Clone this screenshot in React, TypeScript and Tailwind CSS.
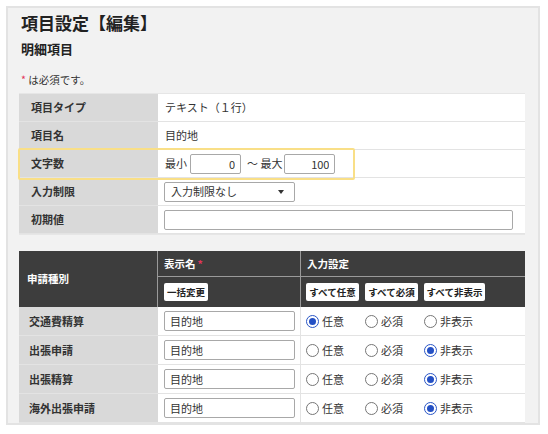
import { useState } from 'react';

type Choice = 'optional' | 'required' | 'hidden';

interface RequestRow {
  id: string;
  label: string;
  displayName: string;
  setting: Choice;
}

const initialRows: RequestRow[] = [
  { id: 'transport', label: '交通費精算', displayName: '目的地', setting: 'optional' },
  { id: 'trip-request', label: '出張申請', displayName: '目的地', setting: 'hidden' },
  { id: 'trip-settle', label: '出張精算', displayName: '目的地', setting: 'hidden' },
  { id: 'overseas', label: '海外出張申請', displayName: '目的地', setting: 'hidden' },
];

const choices: { value: Choice; label: string }[] = [
  { value: 'optional', label: '任意' },
  { value: 'required', label: '必須' },
  { value: 'hidden', label: '非表示' },
];

function Radio({ checked, label, onClick }: { checked: boolean; label: string; onClick: () => void }) {
  return (
    <button type="button" onClick={onClick} className="flex w-[59px] items-center gap-[3px] text-left">
      <span
        className={`flex h-[13px] w-[13px] shrink-0 items-center justify-center rounded-full bg-white ${
          checked ? 'border-[1.5px] border-[#2a56c6]' : 'border border-[#767676]'
        }`}
      >
        {checked && <span className="h-[7px] w-[7px] rounded-full bg-[#2450c4]" />}
      </span>
      <span>{label}</span>
    </button>
  );
}

function SmallButton({
  children,
  className = '',
  onClick,
}: {
  children: React.ReactNode;
  className?: string;
  onClick?: () => void;
}) {
  return (
    <button
      type="button"
      onClick={onClick}
      className={`h-[18px] rounded-[2px] bg-white text-[9.5px] font-bold leading-[18px] text-[#222] ${className}`}
    >
      {children}
    </button>
  );
}

const inputCls =
  'h-[20px] rounded-[2px] border border-[#a8a8a8] bg-white px-[5px] text-[11px] text-[#333] outline-none';

export default function App() {
  const [rows, setRows] = useState(initialRows);

  const setAll = (value: Choice) => setRows(rs => rs.map(r => ({ ...r, setting: value })));

  return (
    <div
      className="min-h-screen bg-white pl-[6px] pt-[6px] text-[11px] text-[#333]"
      style={{ fontFamily: '"Noto Sans CJK JP", "Noto Sans", sans-serif' }}
    >
      <div className="relative h-[419px] w-[534px] overflow-hidden border-2 border-[#e3e3e3] bg-[#f2f2f2] pl-[11px] pr-[13px]">
        {/* Heading */}
        <h1 className="mt-[3px] pl-[2px] text-[17px] font-bold leading-[24px] text-[#222]">項目設定【編集】</h1>
        <h2 className="mt-[5px] pl-[2px] text-[13px] font-bold leading-[18px] text-[#222]">明細項目</h2>
        <p className="mt-[14px] pl-[2px] text-[10.5px] leading-[16px]">
          <span className="text-[#e2345a]">*</span> は必須です。
        </p>

        {/* Item settings */}
        <div className="mt-[5px] border-y border-[#e6e6e6] bg-white">
          <div className="grid h-[28px] grid-cols-[139px_1fr] border-b border-[#e3e3e3]">
            <div className="flex items-center bg-[#d9d9d9] pl-[12px] font-bold">項目タイプ</div>
            <div className="flex items-center pl-[7px]">テキスト（１行）</div>
          </div>
          <div className="grid h-[28px] grid-cols-[139px_1fr] border-b border-[#e3e3e3]">
            <div className="flex items-center bg-[#d9d9d9] pl-[12px] font-bold">項目名</div>
            <div className="flex items-center pl-[7px]">目的地</div>
          </div>
          <div className="grid h-[28px] grid-cols-[139px_1fr] border-b border-[#e3e3e3]">
            <div className="flex items-center bg-[#d9d9d9] pl-[12px] font-bold">文字数</div>
            <div className="flex items-center pl-[7px]">
              <span>最小</span>
              <input readOnly value="0" className={`${inputCls} ml-[3px] w-[51px] text-right`} />
              <span className="ml-[6px]">〜 最大</span>
              <input readOnly value="100" className={`${inputCls} ml-[2px] w-[51px] text-right`} />
            </div>
          </div>
          <div className="grid h-[28px] grid-cols-[139px_1fr] border-b border-[#e3e3e3]">
            <div className="flex items-center bg-[#d9d9d9] pl-[12px] font-bold">入力制限</div>
            <div className="flex items-center pl-[6px]">
              <div className="flex h-[20px] w-[131px] items-center justify-between rounded-[2px] border border-[#a8a8a8] bg-white pl-[6px] pr-[10px]">
                <span>入力制限なし</span>
                <span className="h-0 w-0 border-x-[3px] border-t-[4px] border-x-transparent border-t-[#333]" />
              </div>
            </div>
          </div>
          <div className="grid h-[28px] grid-cols-[139px_1fr] border-b border-[#e3e3e3]">
            <div className="flex items-center bg-[#d9d9d9] pl-[12px] font-bold">初期値</div>
            <div className="flex items-center pl-[6px]">
              <input readOnly className={`${inputCls} w-[349px]`} />
            </div>
          </div>
        </div>

        {/* Per-request settings */}
        <div className="mt-[16px] bg-white">
          <div className="grid grid-cols-[139px_143px_224px] grid-rows-[26px_30px] bg-[#3d3d3d] font-bold text-white">
            <div className="row-span-2 flex items-center border-r border-[#9a9a9a] pl-[8px] text-[10.5px]">申請種別</div>
            <div className="flex items-center border-b border-r border-[#9a9a9a] pl-[6px] text-[10.5px]">
              表示名<span className="ml-[2px] text-[#e2345a]">*</span>
            </div>
            <div className="flex items-center border-b border-[#9a9a9a] pl-[6px] text-[10.5px]">入力設定</div>
            <div className="flex items-center border-r border-[#9a9a9a] pl-[6px]">
              <SmallButton className="w-[44px]">一括変更</SmallButton>
            </div>
            <div className="flex items-center gap-[6px] pl-[5px]">
              <SmallButton className="w-[53px]" onClick={() => setAll('optional')}>
                すべて任意
              </SmallButton>
              <SmallButton className="w-[53px]" onClick={() => setAll('required')}>
                すべて必須
              </SmallButton>
              <SmallButton className="w-[61px]" onClick={() => setAll('hidden')}>
                すべて非表示
              </SmallButton>
            </div>
          </div>

          {rows.map(row => (
            <div key={row.id} className="grid h-[29px] grid-cols-[139px_143px_224px] border-b border-[#e3e3e3]">
              <div className="flex items-center bg-[#d9d9d9] pl-[10px] font-bold">{row.label}</div>
              <div className="flex items-center border-r border-[#e3e3e3] pl-[6px]">
                <input readOnly value={row.displayName} className={`${inputCls} w-[131px]`} />
              </div>
              <div className="flex items-center pl-[5px]">
                {choices.map(c => (
                  <Radio
                    key={c.value}
                    label={c.label}
                    checked={row.setting === c.value}
                    onClick={() =>
                      setRows(rs => rs.map(r => (r.id === row.id ? { ...r, setting: c.value } : r)))
                    }
                  />
                ))}
              </div>
            </div>
          ))}
        </div>

        {/* Highlight around the 文字数 row */}
        <div className="pointer-events-none absolute left-[10px] top-[140px] h-[32px] w-[337px] rounded-[2px] border-2 border-[#f9df87]" />
      </div>
    </div>
  );
}
